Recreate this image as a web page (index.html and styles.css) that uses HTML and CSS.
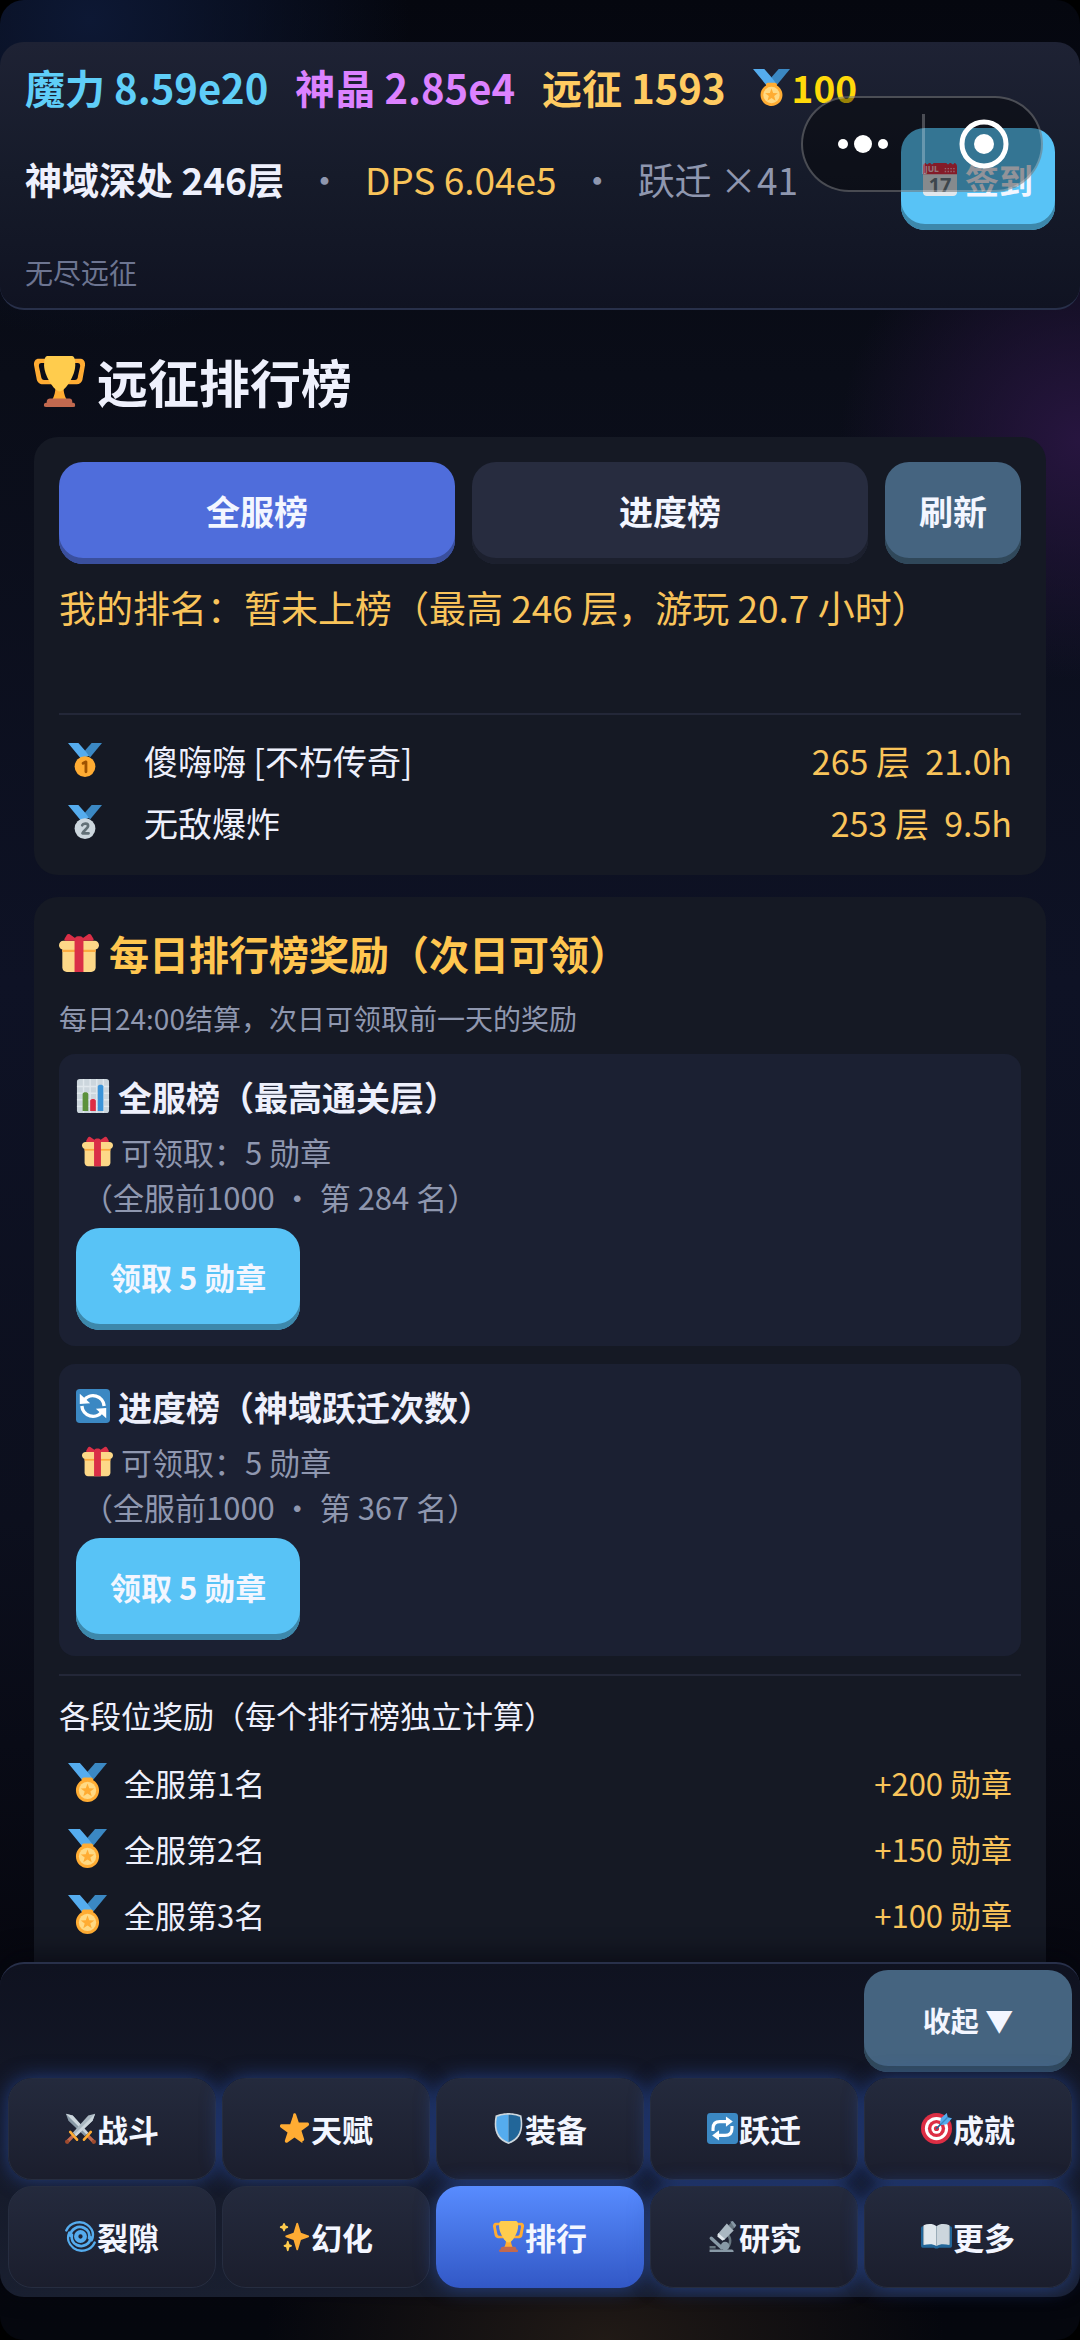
FILE: index.html
```html
<!DOCTYPE html>
<html lang="zh-CN">
<head>
<meta charset="utf-8">
<meta name="viewport" content="width=device-width, initial-scale=1">
<title>远征排行榜</title>
<link rel="stylesheet" href="styles.css">
</head>
<body>
<svg class="sprite" aria-hidden="true">
  <symbol id="trophy" viewBox="0 0 36 36">
    <path fill="#FFAC33" d="M5.123 5h6C12.227 5 13 4.896 13 6V4c0-1.104-.773-2-1.877-2h-8c-2 0-3.583 2.125-3 5 0 0 1.791 9.375 1.917 9.958C2.373 18.5 4.164 20 6.081 20h6.958c1.105 0-.039-1.896-.039-3v-2c0 1.104-.773 2-1.877 2h-4c-1.104 0-1.833-1.042-2-2S3.539 7.667 3.539 7.667C3.206 5.75 4.018 5 5.123 5zm25.812 0h-6C23.831 5 22 4.896 22 6V4c0-1.104 1.831-2 2.935-2h8c2 0 3.584 2.125 3 5 0 0-1.633 9.419-1.771 10-.354 1.5-2.042 3-4 3h-7.146C21.914 20 22 18.104 22 17v-2c0 1.104 1.831 2 2.935 2h4c1.104 0 1.834-1.042 2-2s1.584-7.333 1.584-7.333C32.851 5.75 32.04 5 30.935 5z"/>
    <path fill="#FFAC33" d="M20.832 22c0-6.958-2.709 0-2.709 0s-3-6.958-3 0-3.291 10-3.291 10h12.292c-.001 0-3.292-3.042-3.292-10z"/>
    <path fill="#FFCC4D" d="M29.123 6.577c0 6.775-6.77 18.423-11 18.423-4.231 0-11-11.649-11-18.423 0-5.577 1-6.577 3-6.577h16c2 0 3 1 3 6.577z"/>
    <path fill="#C1694F" d="M27 33c0 1.104.227 2-.877 2h-16C9.018 35 9 34.104 9 33v-1c0-1.104 1.164-2 2.206-2h13.917c1.042 0 1.877.896 1.877 2v1z"/>
    <path fill="#C1694F" d="M29 34.625c0 .76.165 1.375-1.252 1.375H8.498C7.206 36 7 35.385 7 34.625v-.25C7 33.615 7.738 33 8.498 33h19.25c.759 0 1.252.615 1.252 1.375v.25z"/>
  </symbol>
  <symbol id="medal" viewBox="0 0 36 36">
    <path fill="#55ACEE" d="M18 8l-7-8H0l14 17 11.521-4.75z"/>
    <path fill="#3B88C3" d="M25 0l-7 8 5.39 7.312 1.227-1.489L36 0z"/>
    <path fill="#FFAC33" d="M23.205 16.026c.08-.217.131-.448.131-.693 0-1.104-.896-2-2-2h-6.667c-1.105 0-2 .896-2 2 0 .245.05.476.131.693-3.258 1.826-5.464 5.307-5.464 9.307C7.335 31.224 12.111 36 18.002 36s10.667-4.776 10.667-10.667c0-4-2.206-7.481-5.464-9.307z"/>
    <circle fill="#FFD983" cx="18" cy="25.333" r="8"/>
    <path fill="#FFAC33" d="M18 19l1.6 4.3 4.6.2-3.6 2.8 1.3 4.5-3.9-2.6-3.9 2.6 1.3-4.5-3.6-2.8 4.6-.2z"/>
  </symbol>
  <symbol id="first" viewBox="0 0 36 36">
    <path fill="#55ACEE" d="M18 8l-7-8H0l14 17 11.521-4.75z"/>
    <path fill="#3B88C3" d="M25 0l-7 8 5.39 7.312 1.227-1.489L36 0z"/>
    <circle fill="#FFAC33" cx="18" cy="25" r="11"/>
    <path fill="none" stroke="#9E5200" stroke-width="3" stroke-linejoin="round" stroke-linecap="round" d="M16 21.500l3-1.500v10.500"/>
  </symbol>
  <symbol id="second" viewBox="0 0 36 36">
    <path fill="#55ACEE" d="M18 8l-7-8H0l14 17 11.521-4.75z"/>
    <path fill="#3B88C3" d="M25 0l-7 8 5.39 7.312 1.227-1.489L36 0z"/>
    <circle fill="#CCD6DD" cx="18" cy="25" r="11"/>
    <path fill="none" stroke="#627077" stroke-width="2.800" stroke-linejoin="round" stroke-linecap="round" d="M15 21.500c1-2.500 6.500-2.500 6.300.8-.1 2.200-4.300 4-6 7.700h6.500"/>
  </symbol>
  <symbol id="gift" viewBox="0 0 36 36">
    <path fill="#FDD888" d="M33 31c0 2.200-1.800 4-4 4H7c-2.200 0-4-1.800-4-4V14c0-2.200 1.800-4 4-4h22c2.200 0 4 1.800 4 4v17z"/>
    <path fill="#FDD888" d="M36 11c0 2.200-1.800 4-4 4H4c-2.200 0-4-1.800-4-4s1.800-4 4-4h28c2.200 0 4 1.800 4 4z"/>
    <path fill="#FCAB40" d="M3 15h30v2H3z"/>
    <path fill="#DA2F47" d="M19 3h-2c-1.657 0-3 1.343-3 3v29h8V6c0-1.657-1.343-3-3-3z"/>
    <path fill="#DA2F47" d="M16 7c1.100 0 1.263-.516.361-1.147L9.639 1.147c-.902-.631-2.085-.366-2.631.589L4.992 5.264C4.446 6.219 4.900 7 6 7h10zm4 0c-1.100 0-1.263-.516-.361-1.147l6.723-4.706c.901-.631 2.085-.366 2.631.589l2.016 3.527C31.554 6.219 31.100 7 30 7H20z"/>
  </symbol>
  <symbol id="chart" viewBox="0 0 36 36">
    <rect x="1" width="34" height="36" rx="3" fill="#CCD6DD"/>
    <path stroke="#E1E8ED" stroke-width="1.500" d="M1 8h34M1 15h34M1 22h34M1 29h34M8 0v36M15 0v36M22 0v36M29 0v36"/>
    <path fill="#5C913B" d="M7 34V16c0-2.500 6-2.500 6 0v18z"/>
    <path fill="#DD2E44" d="M15 34V23c0-2.500 6-2.500 6 0v11z"/>
    <path fill="#3B94D9" d="M23 34V8c0-2.500 6-2.500 6 0v26z"/>
  </symbol>
  <symbol id="refresh" viewBox="0 0 36 36">
    <rect width="36" height="36" rx="4" fill="#3B88C3"/>
    <path fill="none" stroke="#FFF" stroke-width="3.600" d="M8.500 12a11.800 11.800 0 0 1 21.300 6M27.500 24a11.800 11.800 0 0 1-21.300-6"/>
    <path fill="#FFF" d="M4 5v11l11-1zM32 31V20l-11 1z"/>
  </symbol>
  <symbol id="swords" viewBox="0 0 36 36">
    <path fill="#8899A6" d="M1 1l8 2 18 20-4 4L4 9z"/>
    <path fill="#CCD6DD" d="M1 1l8 2 18 20-2 2z"/>
    <path fill="#AAB8C2" d="M35 1l-8 2L9 23l4 4L32 9z"/>
    <path fill="#CCD6DD" d="M35 1l-3 8-19 18-2-2z"/>
    <path stroke="#C1694F" stroke-width="4" d="M10 26l-8 8M26 26l8 8"/>
    <path stroke="#FFAC33" stroke-width="3" stroke-linecap="round" d="M6 22l8 9M30 22l-8 9"/>
    <circle cx="2.500" cy="33.500" r="2.500" fill="#9E4A2E"/><circle cx="33.500" cy="33.500" r="2.500" fill="#9E4A2E"/>
  </symbol>
  <symbol id="star" viewBox="0 0 36 36">
    <path fill="#FFAC33" d="M27.287 34.627c-.404 0-.806-.124-1.152-.371L18 28.422l-8.135 5.834c-.343.247-.743.371-1.147.371-.403 0-.807-.124-1.150-.371-.690-.496-.981-1.386-.723-2.197l3.059-9.519-8.006-5.838c-.694-.501-.984-1.392-.723-2.205.263-.810 1.016-1.360 1.866-1.363l9.947-.015 3.118-9.450C16.370.854 17.130.308 17.982.308h.035c.853 0 1.612.546 1.876 1.361l3.085 9.450 9.980.015c.853.003 1.606.553 1.866 1.363.263.813-.027 1.704-.720 2.205l-8.006 5.838 3.059 9.519c.260.811-.030 1.701-.721 2.197-.344.247-.747.371-1.149.371z"/>
  </symbol>
  <symbol id="shield" viewBox="0 0 36 36">
    <path fill="#CCD6DD" d="M33 3c-7-3-15-3-15-3S10 0 3 3C0 18 3 31 18 36 33 31 36 18 33 3z"/>
    <path fill="#55ACEE" d="M18 33.900C6.500 29.700 1.500 19.600 4.700 4.400 10.700 2 17.300 2 18 2z"/>
    <path fill="#226699" d="M18 33.900C29.500 29.700 34.500 19.600 31.300 4.400 25.300 2 18.700 2 18 2z"/>
  </symbol>
  <symbol id="repeat" viewBox="0 0 36 36">
    <rect width="36" height="36" rx="4" fill="#3B88C3"/>
    <path fill="none" stroke="#FFF" stroke-width="3.600" d="M7 21v-3q0-8 8-8h9M29 15v3q0 8-8 8h-9"/>
    <path fill="#FFF" d="M22 4v12l8-6zM14 20v12l-8-6z"/>
  </symbol>
  <symbol id="target" viewBox="0 0 36 36">
    <circle cx="18" cy="18" r="18" fill="#DD2E44"/>
    <circle cx="18" cy="18" r="13.500" fill="#FFF"/>
    <circle cx="18" cy="18" r="10" fill="#DD2E44"/>
    <circle cx="18" cy="18" r="6" fill="#FFF"/>
    <circle cx="18" cy="18" r="3" fill="#DD2E44"/>
    <path stroke="#269" stroke-width="2" stroke-linecap="round" d="M18 18L30 6"/>
    <path fill="#55ACEE" d="M22 12l1-6 7-6 1 5 5 1-6 7-6 1z"/>
    <path stroke="#3A87C2" stroke-width="1.500" d="M23 13l8-8"/>
  </symbol>
  <symbol id="cyclone" viewBox="0 0 36 36">
    <g fill="none" stroke="#55ACEE" stroke-linecap="round">
      <path stroke-width="2.800" d="M1.500 11C6 1 19-1 26 4.500c6 4.500 8 11 5 18"/>
      <path stroke-width="2.800" d="M34.500 25C30 35 17 37 10 31.500 4 27 2 20 5 13.500"/>
      <path stroke-width="3.200" d="M6 17C7 9 15 5 22 8c5 2 7 7 6 12M30 19C29 27 21 31 14 28c-5-2-7-7-6-12"/>
      <circle cx="18" cy="18" r="5" stroke-width="5"/>
    </g>
  </symbol>
  <symbol id="sparkles" viewBox="0 0 36 36">
    <path fill="#FFAC33" d="M34.347 16.893l-8.899-3.294-3.323-10.891c-.128-.420-.517-.708-.956-.708-.439 0-.828.288-.956.708l-3.322 10.891-8.900 3.294c-.393.146-.653.519-.653.938 0 .418.260.793.653.938l8.895 3.293 3.324 11.223c.126.424.516.715.959.715.442 0 .833-.291.959-.716l3.324-11.223 8.896-3.293c.391-.144.652-.518.652-.937 0-.418-.261-.792-.653-.938z"/>
    <path fill="#FFCC4D" d="M14.347 27.894l-2.314-.856-.9-3.300c-.118-.436-.513-.738-.964-.738-.451 0-.846.302-.965.737l-.9 3.300-2.313.856c-.393.146-.653.520-.653.938 0 .418.260.793.653.938l2.301.853.907 3.622c.112.444.511.756.970.756.459 0 .858-.312.970-.757l.907-3.622 2.301-.853c.393-.144.653-.519.653-.937 0-.418-.260-.793-.653-.937zM10.009 6.231l-2.364-.875-.876-2.365c-.145-.393-.519-.653-.938-.653-.418 0-.792.260-.938.653l-.875 2.365-2.365.875c-.393.146-.653.520-.653.938 0 .418.260.793.653.938l2.365.875.875 2.365c.146.393.520.653.938.653.418 0 .792-.260.938-.653l.875-2.365 2.365-.875c.393-.146.653-.520.653-.938 0-.418-.260-.792-.653-.938z"/>
  </symbol>
  <symbol id="microscope" viewBox="0 0 36 36">
    <path fill="none" stroke="#66757F" stroke-width="3" d="M22 15c6 3 7 12 0 17"/>
    <path stroke="#8899A6" stroke-width="4" stroke-linecap="round" d="M5 20l12 11"/>
    <circle cx="21" cy="29" r="5" fill="#8899A6"/>
    <path fill="#8899A6" d="M3 33h26q2 0 2 3H3z"/>
    <path fill="#66757F" d="M3 29h7v3H3zM25 5l5 5 2-3-4-5z"/>
    <path fill="#AAB8C2" d="M23 3l8 8-11 11-8-6z"/>
    <path fill="#E1E8ED" d="M13 14l8 7-3 2-6-5z"/>
    <path fill="#8899A6" d="M27 1l3-1 4 5-2 3z"/>
  </symbol>
  <symbol id="book" viewBox="0 0 36 36">
    <path fill="#226699" d="M0 8q0-2 2-2h32q2 0 2 2v21q0 2-2 2H21q-3 2-6 0H2q-2 0-2-2z"/>
    <path fill="#E1E8ED" d="M18 29C13 26 8 27 3 28V5c5-2 11-2 15 1z"/>
    <path fill="#CCD6DD" d="M18 29c5-3 10-2 15-1V5c-5-2-11-2-15 1z"/>
    <path stroke="#99AAB5" stroke-width="1" d="M18 6v23M3 6v21M33 6v21"/>
  </symbol>
</svg>

<div class="app">
  <header class="status">
    <div class="currencies">
      <span class="mana">魔力 8.59e20</span>
      <span class="crystal">神晶 2.85e4</span>
      <span class="expedition">远征 1593</span>
      <span class="medals"><svg class="icon"><use href="#medal"/></svg>100</span>
    </div>
    <div class="stage">
      <strong>神域深处 246层</strong>
      <span>·</span>
      <span class="dps">DPS 6.04e5</span>
      <span>·</span>
      <span>跃迁 ×41</span>
      <button class="btn btn-cyan checkin" type="button">
        <svg class="icon" viewBox="0 0 36 36">
          <path fill="#E0E7EC" d="M36 32c0 2.209-1.791 4-4 4H4c-2.209 0-4-1.791-4-4V9h36v23z"/>
          <path fill="#DD2E44" d="M0 13V5c0-2.200 1.200-4 3-4 0 2 3 2 3 0h2c0 2 3 2 3 0h14c0 2 3 2 3 0h2c0 2 3 2 3 0 1.800 0 3 1.800 3 4v8z"/>
          <path stroke="#F4ABBA" stroke-width="1.500" stroke-dasharray="1.500 1.500" d="M23 7h12M23 10h12"/>
          <text class="cal-month" x="2" y="11">JUL</text>
          <text class="cal-day" x="18" y="32" text-anchor="middle">17</text>
        </svg>签到</button>
    </div>
    <p class="mode">无尽远征</p>
    <div class="capsule">
      <button type="button" aria-label="更多操作"><svg width="50" height="20" viewBox="0 0 50 20" fill="#fff"><circle cx="5" cy="10" r="5"/><circle cx="25" cy="10" r="9"/><circle cx="45" cy="10" r="5"/></svg></button>
      <button type="button" aria-label="关闭"><svg width="50" height="50" viewBox="0 0 50 50"><circle cx="25" cy="25" r="22" fill="none" stroke="#fff" stroke-width="5"/><circle cx="25" cy="25" r="10" fill="#fff"/></svg></button>
    </div>
  </header>

  <main class="content">
    <h1><svg class="icon"><use href="#trophy"/></svg>远征排行榜</h1>

    <section class="card">
      <div class="tabs">
        <button class="btn btn-active" type="button">全服榜</button>
        <button class="btn btn-dark" type="button">进度榜</button>
        <button class="btn btn-steel" type="button">刷新</button>
      </div>
      <p class="my-rank">我的排名：暂未上榜（最高 246 层，游玩 20.7 小时）</p>
      <ol class="ranking">
        <li><svg class="icon"><use href="#first"/></svg><span class="name">傻嗨嗨 [不朽传奇]</span><span class="value">265 层&nbsp; 21.0h</span></li>
        <li><svg class="icon"><use href="#second"/></svg><span class="name">无敌爆炸</span><span class="value">253 层&nbsp; 9.5h</span></li>
      </ol>
    </section>

    <section class="card rewards">
      <h2><svg class="icon"><use href="#gift"/></svg>每日排行榜奖励（次日可领）</h2>
      <p class="note">每日24:00结算，次日可领取前一天的奖励</p>
      <article class="claim">
        <h3><svg class="icon"><use href="#chart"/></svg>全服榜（最高通关层）</h3>
        <p><svg class="icon"><use href="#gift"/></svg>可领取：5 勋章</p>
        <p>（全服前1000 · 第 284 名）</p>
        <button class="btn btn-cyan" type="button">领取 5 勋章</button>
      </article>
      <article class="claim">
        <h3><svg class="icon"><use href="#refresh"/></svg>进度榜（神域跃迁次数）</h3>
        <p><svg class="icon"><use href="#gift"/></svg>可领取：5 勋章</p>
        <p>（全服前1000 · 第 367 名）</p>
        <button class="btn btn-cyan" type="button">领取 5 勋章</button>
      </article>
      <p class="tiers-title">各段位奖励（每个排行榜独立计算）</p>
      <ul class="tiers">
        <li><svg class="icon"><use href="#medal"/></svg><span class="name">全服第1名</span><span class="value">+200 勋章</span></li>
        <li><svg class="icon"><use href="#medal"/></svg><span class="name">全服第2名</span><span class="value">+150 勋章</span></li>
        <li><svg class="icon"><use href="#medal"/></svg><span class="name">全服第3名</span><span class="value">+100 勋章</span></li>
      </ul>
    </section>
  </main>

  <nav class="dock">
    <button class="btn btn-steel collapse" type="button">收起 ▼</button>
    <button class="tab glow" type="button"><svg class="icon"><use href="#swords"/></svg>战斗</button>
    <button class="tab glow" type="button"><svg class="icon"><use href="#star"/></svg>天赋</button>
    <button class="tab glow" type="button"><svg class="icon"><use href="#shield"/></svg>装备</button>
    <button class="tab glow" type="button"><svg class="icon"><use href="#repeat"/></svg>跃迁</button>
    <button class="tab glow" type="button"><svg class="icon"><use href="#target"/></svg>成就</button>
    <button class="tab" type="button"><svg class="icon"><use href="#cyclone"/></svg>裂隙</button>
    <button class="tab" type="button"><svg class="icon"><use href="#sparkles"/></svg>幻化</button>
    <button class="tab glow current" type="button" aria-current="page"><svg class="icon"><use href="#trophy"/></svg>排行</button>
    <button class="tab glow" type="button"><svg class="icon"><use href="#microscope"/></svg>研究</button>
    <button class="tab glow" type="button"><svg class="icon"><use href="#book"/></svg>更多</button>
  </nav>
</div>
</body>
</html>
```
FILE: styles.css
```css
:root {
  --text: #eef0fc;
  --muted: #8f97af;
  --gold: #f9c45a;
  --line: #232738;
}

* {
  box-sizing: border-box;
  margin: 0;
  padding: 0;
}

html {
  background: #000;
}

body {
  color: var(--text);
  font-family: "Noto Sans CJK SC", "Noto Sans", sans-serif;
  font-size: 31px;
  line-height: 45px;
}

button {
  border: 0;
  color: #f3f6ff;
  font: inherit;
  font-weight: 700;
  cursor: pointer;
}

ol,
ul {
  list-style: none;
}

.sprite {
  position: absolute;
  width: 0;
  height: 0;
}

.cal-month {
  fill: #f4c5cd;
  font: 700 9px "Noto Sans", sans-serif;
}

.cal-day {
  fill: #66757f;
  font: 700 21px "Noto Sans", sans-serif;
}

.icon {
  flex: none;
  width: 1em;
  height: 1em;
}

.app {
  display: flex;
  flex-direction: column;
  height: 100vh;
  padding: 42px 0 43px;
  border-radius: 24px;
  overflow: hidden;
  background:
    radial-gradient(circle at 90px 20px, #0d1834 0, rgba(13, 24, 52, 0) 320px),
    radial-gradient(circle at 100% 440px, #27153f 0, rgba(39, 21, 63, 0) 240px),
    radial-gradient(ellipse 340px 200px at 56% 100%, #211a16 0, rgba(33, 26, 22, 0) 100%),
    linear-gradient(#05070f 0, #0a0d18 16%, #0e1225 42%, #0c0f1d 65%, #06070f 84%, #05070e 100%);
}

/* Resource header */

.status {
  position: relative;
  flex: none;
  padding: 14px 25px 16px;
  border-bottom: 2px solid #28304a;
  border-radius: 24px;
  background: linear-gradient(#1e2234, #161b2a 50%, #101322);
}

.currencies,
.stage {
  display: flex;
  align-items: center;
}

.currencies {
  gap: 27px;
  height: 62px;
  font-size: 40px;
  font-weight: 700;
}

.mana { color: #5fcef8; }
.crystal { color: #dc82ff; }
.expedition { color: #ffcb61; }

.medals {
  display: flex;
  align-items: center;
  gap: 2px;
  color: #ffd90a;
  font-size: 37px;
}

.stage {
  gap: 22px;
  height: 122px;
  color: var(--muted);
  font-size: 37px;
}

.stage strong { color: var(--text); }
.dps { color: var(--gold); }

.stage .checkin {
  margin-left: auto;
  padding: 0 22px;
}

.mode {
  height: 52px;
  padding-top: 10px;
  color: #6d7591;
  font-size: 28px;
}

.capsule {
  position: absolute;
  top: 54px;
  right: 37px;
  display: grid;
  grid-template-columns: 1fr 1fr;
  width: 242px;
  height: 96px;
  border: 2px solid rgba(255, 255, 255, .25);
  border-radius: 48px;
  background: rgba(0, 0, 0, .4);
}

.capsule button {
  display: grid;
  place-items: center;
  background: none;
}

.capsule button + button {
  padding-left: 4px;
}

.capsule button + button::before {
  content: "";
  position: absolute;
  top: 16px;
  left: 119px;
  width: 3px;
  height: 60px;
  background: rgba(255, 255, 255, .25);
}

/* Buttons */

.btn {
  display: flex;
  align-items: center;
  justify-content: center;
  gap: 8px;
  height: 102px;
  padding: 0 34px 6px;
  border-radius: 24px;
  font-size: 34px;
}

.btn-active { background: #4f6ddb; box-shadow: inset 0 -6px #3a4f9d; }
.btn-dark { background: #272c3f; box-shadow: inset 0 -6px #1c202e; }
.btn-steel { background: #456480; box-shadow: inset 0 -6px #30485a; }
.btn-cyan { background: #58c3f6; box-shadow: inset 0 -6px #3d88ab; }

/* Content */

.content {
  flex: 1;
  min-height: 0;
  padding: 33px 34px 0;
  overflow: hidden;
}

h1 {
  display: flex;
  align-items: center;
  gap: 12px;
  height: 76px;
  margin-bottom: 18px;
  font-size: 51px;
}

.card {
  margin-bottom: 22px;
  padding: 25px 25px 22px;
  border-radius: 24px;
  background: #151924;
}

.tabs {
  display: grid;
  grid-template-columns: 1fr 1fr auto;
  gap: 17px;
}

.my-rank {
  height: 149px;
  padding-top: 21px;
  color: var(--gold);
  font-size: 37px;
}

.ranking {
  padding: 14px 9px 0;
  border-top: 2px solid var(--line);
  font-size: 34px;
}

.ranking li,
.tiers li {
  display: flex;
  align-items: center;
}

.ranking li {
  gap: 42px;
  height: 62px;
}

.value {
  margin-left: auto;
  color: var(--gold);
}

h2 {
  display: flex;
  align-items: center;
  gap: 10px;
  height: 62px;
  color: #ffc650;
  font-size: 40px;
}

.note {
  height: 70px;
  padding-top: 12px;
  color: var(--muted);
  font-size: 28px;
}

.claim {
  margin-bottom: 18px;
  padding: 15px 17px 16px;
  border-radius: 16px;
  background: #1b2032;
}

.claim h3 {
  display: flex;
  align-items: center;
  gap: 8px;
  height: 54px;
  margin-bottom: 6px;
  font-size: 34px;
}

.claim p {
  display: flex;
  align-items: center;
  gap: 8px;
  padding-left: 6px;
  color: var(--muted);
}

.claim .btn {
  margin-top: 9px;
  font-size: 31px;
}

.tiers-title {
  height: 75px;
  padding-top: 16px;
  border-top: 2px solid var(--line);
}

.tiers {
  padding: 0 9px;
}

.tiers li {
  gap: 17px;
  height: 66px;
}

.tiers .icon {
  width: 39px;
  height: 39px;
}

.rewards {
  padding-bottom: 60px;
}

/* Bottom dock */

.dock {
  z-index: 1;
  display: grid;
  flex: none;
  grid-template-columns: repeat(5, 1fr);
  gap: 6px;
  padding: 6px 8px 9px;
  border-top: 2px solid #28304a;
  border-radius: 24px;
  background: linear-gradient(#0f1220, #191f30);
  box-shadow: 0 -6px 24px rgba(4, 5, 12, .6);
}

.collapse {
  grid-column: 5;
  padding: 0 0 2px;
  font-size: 28px;
}

.tab {
  display: flex;
  align-items: center;
  justify-content: center;
  gap: 1px;
  height: 102px;
  padding-bottom: 2px;
  border: 1px solid #262d40;
  border-radius: 24px;
  background: linear-gradient(#242a3d, #1b1e2d);
  font-size: 31px;
}

.glow {
  box-shadow: 0 0 20px rgba(48, 92, 200, .55);
}

.current {
  border-color: transparent;
  background: linear-gradient(#588cff, #3258c6) border-box;
}
```
